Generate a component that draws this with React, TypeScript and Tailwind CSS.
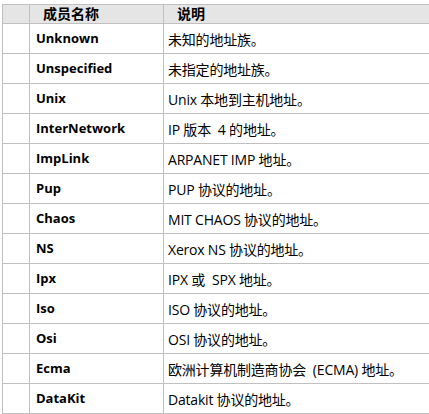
const rows: [string, string][] = [
  ["Unknown", "未知的地址族。"],
  ["Unspecified", "未指定的地址族。"],
  ["Unix", "Unix 本地到主机地址。"],
  ["InterNetwork", "IP 版本\u00a0 4 的地址。"],
  ["ImpLink", "ARPANET IMP 地址。"],
  ["Pup", "PUP 协议的地址。"],
  ["Chaos", "MIT CHAOS 协议的地址。"],
  ["NS", "Xerox NS 协议的地址。"],
  ["Ipx", "IPX 或\u00a0 SPX 地址。"],
  ["Iso", "ISO 协议的地址。"],
  ["Osi", "OSI 协议的地址。"],
  ["Ecma", "欧洲计算机制造商协会\u00a0 (ECMA) 地址。"],
  ["DataKit", "Datakit 协议的地址。"],
];

const font = {
  fontFamily: '"Open Sans", "Noto Sans CJK SC", sans-serif',
};

export default function App() {
  return (
    <div className="w-[429px] h-[414px] overflow-hidden bg-white pt-[4px] pl-[2px]" style={font}>
      <div className="w-[460px] border-l border-t border-[#c0c0c0] text-black">
        {/* header */}
        <div className="flex h-[19px] border-b border-[#c0c0c0] bg-[#e5e5e5]">
          <div className="w-[27px] border-r border-[#c0c0c0]" />
          <div className="w-[134px] border-r border-[#c0c0c0] pl-[13px] text-[14px] font-bold leading-[18px]">
            成员名称
          </div>
          <div className="flex-1 pl-[13px] text-[14px] font-bold leading-[18px]">说明</div>
        </div>

        {rows.map(([name, desc]) => (
          <div key={name} className="flex h-[30px] border-b border-[#c0c0c0]">
            <div className="w-[27px] border-r border-[#c0c0c0]" />
            <div className="flex w-[134px] items-center border-r border-[#c0c0c0] pl-[6px] pt-[1px] text-[13px] font-bold">
              {name}
            </div>
            <div className="flex flex-1 items-center pl-[4px] pt-[1px] text-[14px] tracking-[-0.2px]">
              {desc}
            </div>
          </div>
        ))}
      </div>
    </div>
  );
}
